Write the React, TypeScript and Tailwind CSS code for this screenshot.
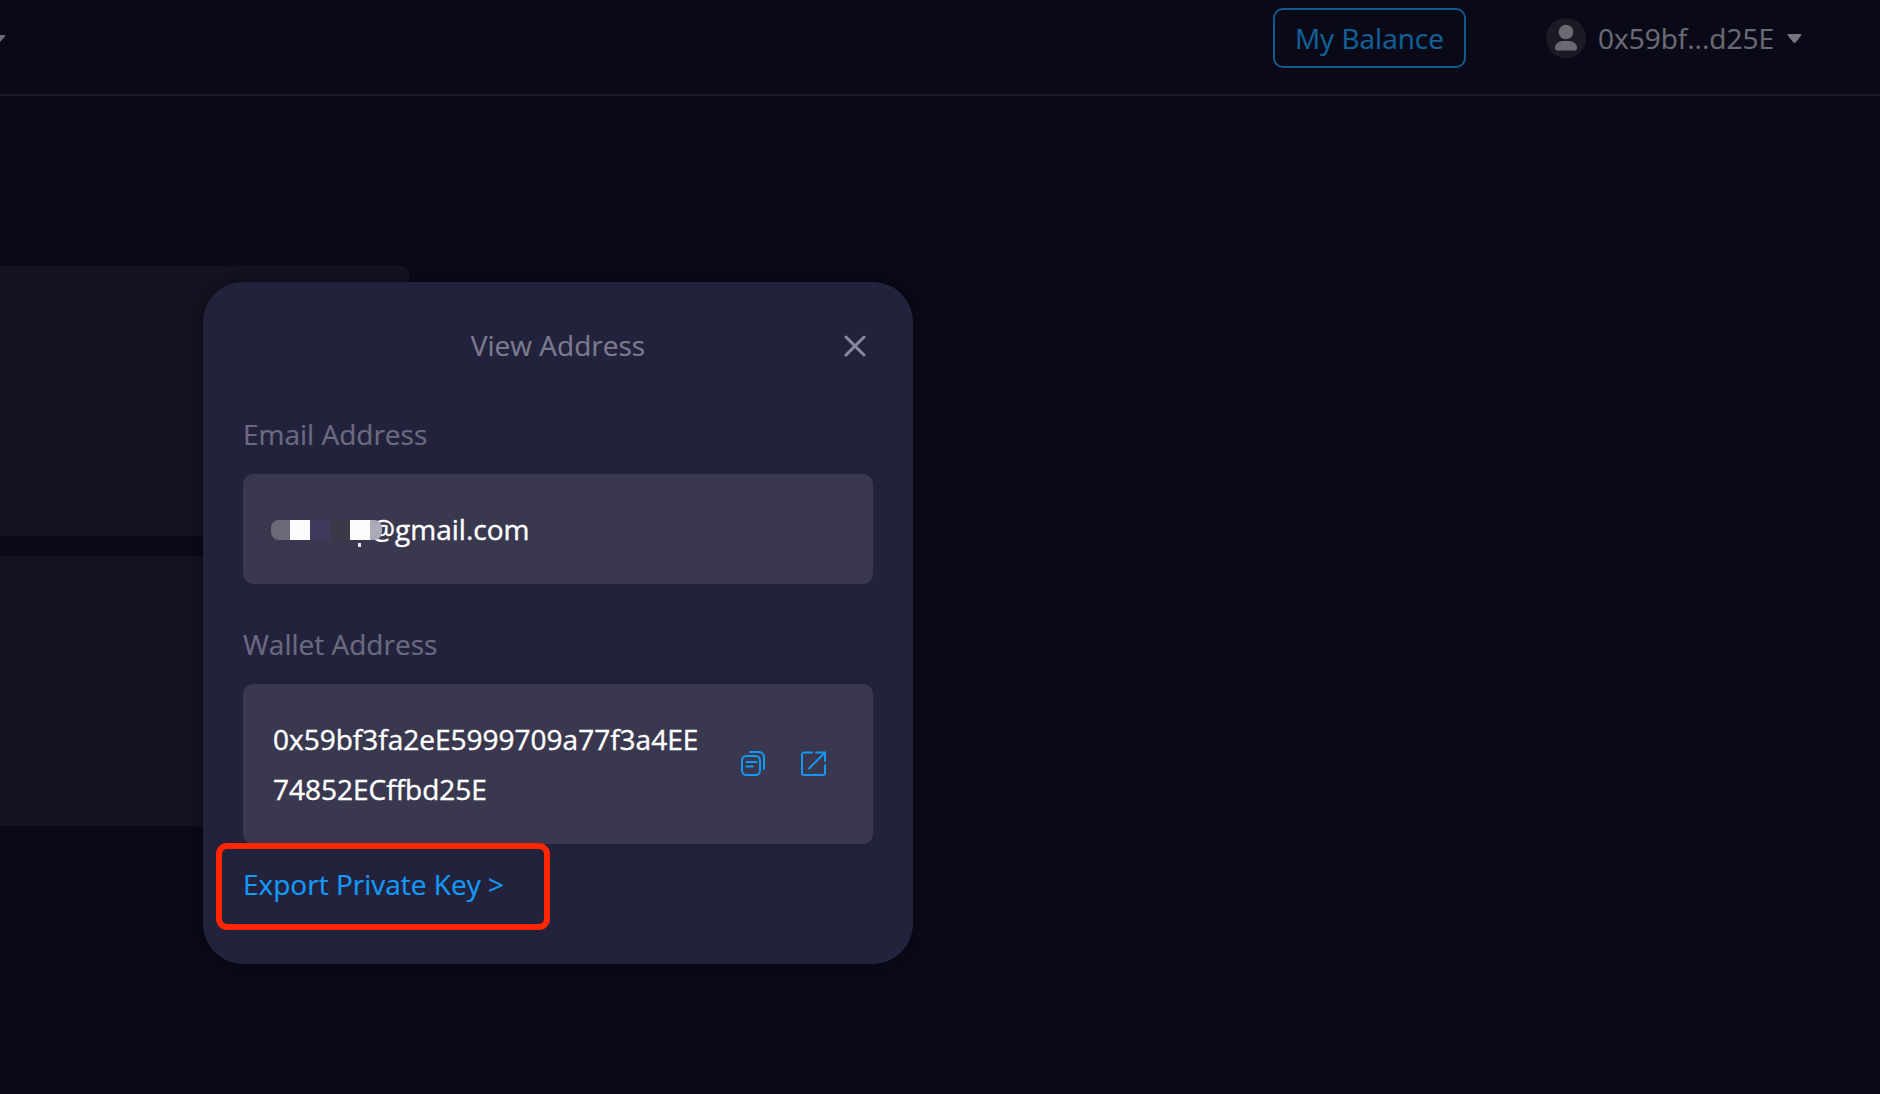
const CopyIcon = () => (
  <svg width="26" height="26" viewBox="0 0 26 26" fill="none" stroke="#1499f3" strokeWidth="2" strokeLinecap="round" strokeLinejoin="round">
    <rect x="2" y="6" width="18" height="19" rx="4.500" />
    <path d="M10 2h9a5 5 0 0 1 5 5v12M6.500 12h10M6.500 16.500h6" />
  </svg>
);

const OpenIcon = () => (
  <svg width="26" height="26" viewBox="0 0 26 26" fill="none" stroke="#1499f3" strokeWidth="2" strokeLinecap="round" strokeLinejoin="round">
    <path d="M12 2.500H4a2 2 0 0 0-2 2V23a2 2 0 0 0 2 2h19a2 2 0 0 0 2-2v-8M16 2.500h9V11M25 2.500 9 18.500" />
  </svg>
);

function Header() {
  return (
    <header className="flex h-24 shrink-0 justify-between border-b-2 border-[#1a1a27] pb-[18px]">
      <svg className="mt-[34px]" width="6" height="9" viewBox="0 0 6 9" fill="#6c6c79">
        <path d="M0 1h4q2 0 1 1.500L0 8z" />
      </svg>
      <div className="flex pr-[78px]">
        <button className="mt-2 h-[60px] w-[193px] rounded-[10px] border-2 border-[#135a8c] text-[#136096] [-webkit-text-stroke:0.2px]">My Balance</button>
        <div className="ml-20 flex h-[76px] items-center">
          <svg width="40" height="40" viewBox="0 0 40 40">
            <circle cx="20" cy="20" r="20" fill="#1b1b26" />
            <circle cx="20" cy="14" r="7.300" fill="#6a6a73" />
            <path d="M9 30c0-4 3.500-7 8-7h6c4.500 0 8 3 8 7q0 2.500-2.500 2.500h-17Q9 32.500 9 30z" fill="#6a6a73" />
          </svg>
          <span className="ml-3 text-[#6a6a74] [-webkit-text-stroke:0.2px]">0x59bf...d25E</span>
          <svg className="ml-[13px] mt-0.5" width="15" height="10" viewBox="0 0 15 10" fill="#76767f">
            <path d="M2 0h11q2.300 0 1 1.800L9 7.900q-1.500 1.700-3 0L1 1.800Q-.3 0 2 0z" />
          </svg>
        </div>
      </div>
    </header>
  );
}

function MaskedEmail() {
  return (
    <div className="relative flex h-full items-center">
      <span className="pl-[99px]">@gmail.com</span>
      <span className="absolute left-[87px] top-[69px] h-1 w-[3px] bg-[#e6e6ec]" />
      <div className="absolute left-0 top-[46px] flex h-5">
        <span className="w-[19px] rounded-l-lg bg-[#6b6b77]" />
        <span className="w-5 bg-[#fcfbfe]" />
        <span className="w-5 bg-[#403b5c]" />
        <span className="w-5 bg-[#3b3948]" />
        <span className="w-5 bg-[#fcfbfe]" />
        <span className="w-3 rounded-r-lg bg-[#abaab9]" />
      </div>
    </div>
  );
}

function AddressDialog() {
  return (
    <section className="absolute left-[203px] top-[282px] flex h-[682px] w-[710px] flex-col rounded-[40px] bg-[#23223d] px-10 shadow-[0_0_12px_rgba(0,0,0,0.35)] [-webkit-text-stroke:0.2px]">
      <div className="relative mt-[43px] text-center text-[#7b7b8e]">
        View Address
        <svg className="absolute right-[7px] top-2.5" width="22" height="22" viewBox="0 0 22 22" stroke="#8b8a9c" strokeWidth="3" strokeLinecap="round">
          <path d="M2 2l18 18M20 2 2 20" />
        </svg>
      </div>
      <div className="mt-[49px] text-[#6b6b80]">Email Address</div>
      <div className="mt-5 h-[110px] shrink-0 rounded-[10px] bg-[#39384f] pl-7 text-white [-webkit-text-stroke:0.4px]">
        <MaskedEmail />
      </div>
      <div className="mt-10 text-[#6b6b80]">Wallet Address</div>
      <div className="mt-5 flex h-40 shrink-0 items-center rounded-[10px] bg-[#39384f] pl-[30px] text-white [-webkit-text-stroke:0.4px]">
        <div className="w-[467px] leading-[50px]">0x59bf3fa2eE5999709a77f3a4EE<br />74852ECffbd25E</div>
        <div className="flex gap-[34px] pb-0.5">
          <CopyIcon />
          <OpenIcon />
        </div>
      </div>
      <a className="mt-5 text-[#149af6]">Export Private Key &gt;</a>
      <div className="absolute left-[13px] top-[561px] h-[87px] w-[334px] rounded-[11px] border-[6px] border-[#ff2600]" />
    </section>
  );
}

export default function App() {
  return (
    <div className="relative flex h-[1094px] w-[1880px] flex-col overflow-hidden bg-[#0a0918] font-['Open_Sans',sans-serif] text-[28px] leading-10">
      <Header />
      <main className="mt-[170px] flex flex-col gap-5">
        <div className="h-[270px] w-[409px] rounded-r-[8px] bg-[#13121f]" />
        <div className="h-[270px] w-[409px] rounded-r-[8px] bg-[#13121f]" />
      </main>
      <AddressDialog />
    </div>
  );
}
